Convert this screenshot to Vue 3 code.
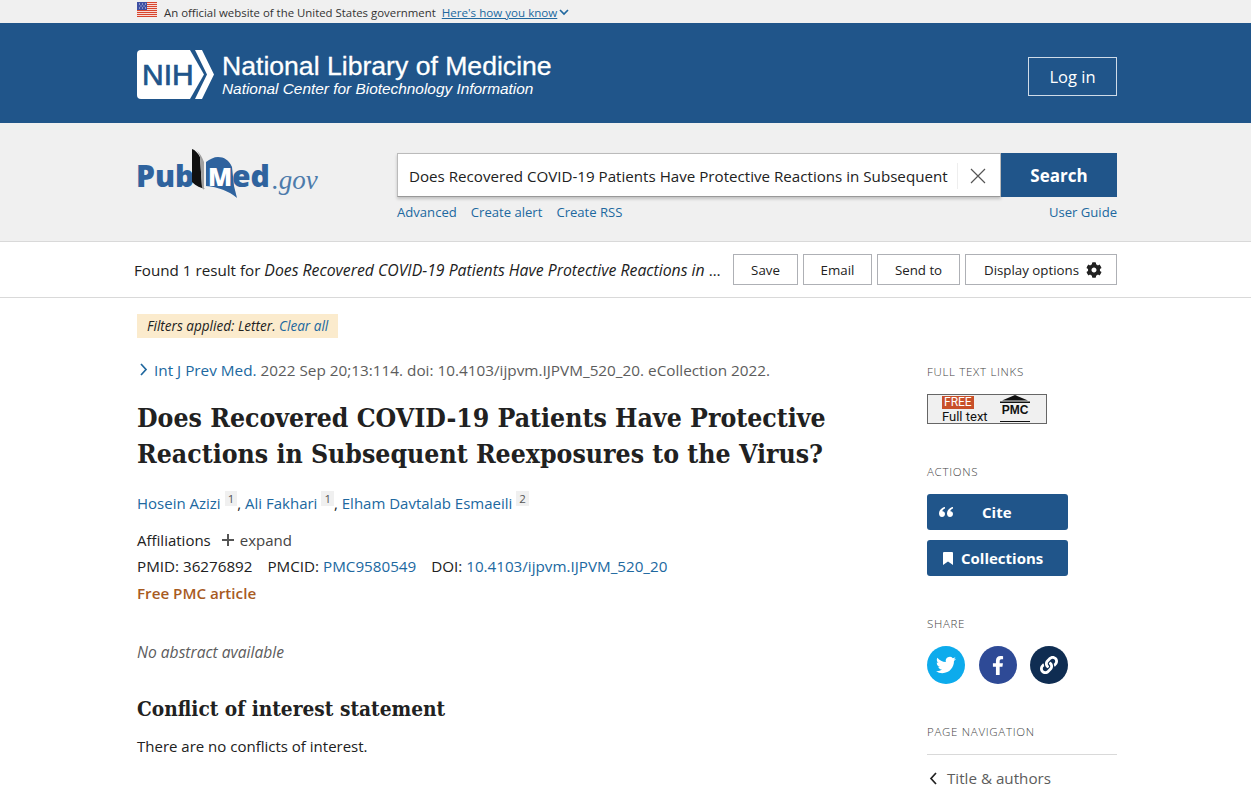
<template>
  <div class="page">
    <div class="gov-banner">
      <div class="wrap gov-inner">
        <svg class="flag" width="20" height="15" viewBox="0 0 20 15">
          <rect width="20" height="15" fill="#fff" />
          <rect v-for="n in 8" :key="n" x="0" :y="(n - 1) * 2" width="20" height="1.2" fill="#d8452e" />
          <rect width="10" height="8" fill="#3d4fa3" />
          <path d="M2 2h1M5 2h1M8 2h1M3.500 4h1M6.500 4h1M2 6h1M5 6h1M8 6h1" stroke="#fff" stroke-width="0.8" />
        </svg>
        <span class="gov-text">An official website of the United States government</span>
        <a class="gov-link">Here's how you know</a>
        <svg width="10" height="7" viewBox="0 0 10 7" class="gov-chev"><path d="M1 1l4 4 4-4" fill="none" stroke="#20689f" stroke-width="1.7" /></svg>
      </div>
    </div>

    <header class="ncbi-head">
      <div class="wrap head-inner">
        <div class="nih-brand">
          <svg class="nih-logo" width="78" height="49" viewBox="0 0 78 49">
            <path d="M4 0h49l14 24.500L53 49H4a4 4 0 0 1-4-4V4a4 4 0 0 1 4-4z" fill="#fff" />
            <path d="M58 0h7l12 24.500L65 49h-7l12-24.500z" fill="#fff" />
            <text x="5" y="35" class="nih-word">NIH</text>
          </svg>
          <div class="nih-titles">
            <div class="nlm">National Library of Medicine</div>
            <div class="ncbi">National Center for Biotechnology Information</div>
          </div>
        </div>
        <a class="login">Log in</a>
      </div>
    </header>

    <section class="search-band">
      <div class="wrap search-inner">
        <svg class="pubmed-logo" width="182" height="52" viewBox="0 0 182 52">
          <text x="-1" y="38" class="pm-word">Pub</text>
          <path d="M55 0c3 1 6 4 8 8l2 30 3 2c-4-1-9-3-13-7z" fill="#111" />
          <path d="M59 1c4 3 6 7 8 12v28l-2-3-2-30c-1-3-2-5-4-7z" fill="#a0a0a0" />
          <path d="M69 13c4-3 8-5 12-5 6 0 11 3 14 10l2 19 3 12c-8-7-19-11-31-12z" fill="#2f639e" />
          <text x="71" y="37" class="pm-m">M</text>
          <text x="95" y="38" class="pm-word">ed</text>
          <text x="135" y="40" class="pm-gov">.gov</text>
        </svg>
        <div class="search-col">
          <div class="search-row">
            <div class="search-box">
              <span class="search-term">Does Recovered COVID-19 Patients Have Protective Reactions in Subsequent</span>
              <span class="search-sep"></span>
              <svg width="16" height="16" viewBox="0 0 16 16" class="clear-x"><path d="M1 1l14 14M15 1L1 15" stroke="#555" stroke-width="1.200" fill="none" /></svg>
            </div>
            <button class="search-btn">Search</button>
          </div>
          <div class="search-links">
            <a>Advanced</a>
            <a>Create alert</a>
            <a>Create RSS</a>
            <a class="guide">User Guide</a>
          </div>
        </div>
      </div>
    </section>

    <section class="result-bar">
      <div class="wrap result-inner">
        <div class="result-text">Found 1 result for <em>Does Recovered COVID-19 Patients Have Protective Reactions in Subsequent Reexposures to the Virus?</em></div>
        <div class="result-btns">
          <button class="act save">Save</button>
          <button class="act email">Email</button>
          <button class="act send">Send to</button>
          <button class="act display">
            Display options
            <svg width="16" height="16" viewBox="0 0 512 512">
              <path fill="#222" d="M487.400 315.700l-42.600-24.600c4.300-23.200 4.300-47 0-70.200l42.600-24.600c4.900-2.800 7.100-8.600 5.500-14-11.100-35.600-30-67.800-54.700-94.600-3.800-4.100-10-5.100-14.800-2.300L380.800 110c-17.900-15.400-38.500-27.300-60.800-35.100V25.800c0-5.600-3.900-10.500-9.400-11.700-36.700-8.200-74.300-7.800-109.200 0-5.500 1.200-9.400 6.100-9.400 11.700V75c-22.200 7.900-42.800 19.800-60.800 35.100L88.700 85.500c-4.900-2.800-11-1.900-14.800 2.300-24.700 26.700-43.600 58.900-54.700 94.600-1.700 5.400.6 11.200 5.500 14L67.300 221c-4.300 23.200-4.300 47 0 70.200l-42.600 24.600c-4.900 2.800-7.100 8.600-5.500 14 11.100 35.600 30 67.800 54.700 94.600 3.800 4.100 10 5.100 14.800 2.300l42.600-24.600c17.900 15.400 38.500 27.300 60.800 35.100v49.200c0 5.600 3.900 10.500 9.400 11.700 36.700 8.200 74.300 7.800 109.200 0 5.500-1.200 9.400-6.100 9.400-11.700v-49.200c22.200-7.900 42.800-19.800 60.800-35.100l42.600 24.600c4.900 2.800 11 1.900 14.800-2.300 24.700-26.700 43.600-58.900 54.700-94.600 1.500-5.500-.7-11.300-5.600-14.100zM256 336c-44.100 0-80-35.900-80-80s35.900-80 80-80 80 35.900 80 80-35.900 80-80 80z" />
            </svg>
          </button>
        </div>
      </div>
    </section>

    <main class="wrap main-grid">
      <article class="article">
        <div class="filters"><em>Filters applied: Letter. <a>Clear all</a></em></div>
        <div class="citation">
          <svg width="9" height="13" viewBox="0 0 9 13"><path d="M2 1l5 5.500L2 12" fill="none" stroke="#20689f" stroke-width="1.700" /></svg>
          <a>Int J Prev Med.</a> 2022 Sep 20;13:114. doi: 10.4103/ijpvm.IJPVM_520_20. eCollection 2022.
        </div>
        <h1>Does Recovered COVID-19 Patients Have Protective Reactions in Subsequent Reexposures to the Virus?</h1>
        <div class="authors">
          <a>Hosein Azizi</a><sup>1</sup>, <a>Ali Fakhari</a><sup>1</sup>, <a>Elham Davtalab Esmaeili</a><sup>2</sup>
        </div>
        <div class="affil">
          Affiliations
          <svg width="12" height="12" viewBox="0 0 12 12"><path d="M6 0v12M0 6h12" stroke="#555" stroke-width="2" /></svg>
          <span>expand</span>
        </div>
        <div class="ids">
          <span>PMID: 36276892</span>
          <span>PMCID: <a>PMC9580549</a></span>
          <span>DOI: <a>10.4103/ijpvm.IJPVM_520_20</a></span>
        </div>
        <div class="free">Free PMC article</div>
        <p class="no-abstract">No abstract available</p>
        <h2>Conflict of interest statement</h2>
        <p class="conflict">There are no conflicts of interest.</p>
      </article>

      <aside class="side">
        <h3 class="side-title">FULL TEXT LINKS</h3>
        <div class="pmc-badge">
          <div class="pmc-left">
            <span class="pmc-free">FREE</span>
            <span class="pmc-full">Full text</span>
          </div>
          <div class="pmc-right">
            <svg width="30" height="8" viewBox="0 0 30 8"><path d="M15 0l13 5.500H2z M0 6.500h30V8H0z" fill="#111" /></svg>
            <span class="pmc-word">PMC</span>
          </div>
        </div>

        <h3 class="side-title actions-title">ACTIONS</h3>
        <button class="side-btn cite">
          <svg width="14" height="10" viewBox="0 0 14 10">
            <path d="M6 0C3 .5 0 3 0 6.500 0 9 1.500 10 3 10s3-1 3-3-1.500-3-2.700-2.800C3.600 3 4.700 2 6 1.500zM14 0c-3 .5-6 3-6 6.500C8 9 9.500 10 11 10s3-1 3-3-1.500-3-2.700-2.800C11.600 3 12.700 2 14 1.500z" fill="#fff" />
          </svg>
          <span>Cite</span>
        </button>
        <button class="side-btn coll">
          <svg width="10" height="13" viewBox="0 0 10 13"><path d="M1 0h8a1 1 0 0 1 1 1v12L5 9.500 0 13V1a1 1 0 0 1 1-1z" fill="#fff" /></svg>
          <span>Collections</span>
        </button>

        <h3 class="side-title share-title">SHARE</h3>
        <div class="share">
          <span class="circle tw">
            <svg width="20" height="20" viewBox="0 0 24 24"><path fill="#fff" d="M23.953 4.570a10 10 0 0 1-2.825.775 4.958 4.958 0 0 0 2.163-2.723c-.951.555-2.005.959-3.127 1.184a4.920 4.920 0 0 0-8.384 4.482C7.690 8.095 4.067 6.130 1.640 3.162a4.822 4.822 0 0 0-.666 2.475c0 1.710.870 3.213 2.188 4.096a4.904 4.904 0 0 1-2.228-.616v.060a4.923 4.923 0 0 0 3.946 4.827 4.996 4.996 0 0 1-2.212.085 4.936 4.936 0 0 0 4.604 3.417 9.867 9.867 0 0 1-6.102 2.105c-.390 0-.779-.023-1.170-.067a13.995 13.995 0 0 0 7.557 2.209c9.053 0 13.998-7.496 13.998-13.985 0-.210 0-.420-.015-.630A9.935 9.935 0 0 0 24 4.590z" /></svg>
          </span>
          <span class="circle fb">
            <svg width="12" height="19" viewBox="0 0 320 512"><path fill="#fff" d="M279.140 288l14.220-92.660h-88.910v-60.130c0-25.350 12.420-50.060 52.240-50.060h40.420V6.260S260.430 0 225.360 0c-73.220 0-121.080 44.380-121.080 124.720v70.620H22.890V288h81.390v224h100.170V288z" /></svg>
          </span>
          <span class="circle lk">
            <svg width="18" height="18" viewBox="0 0 512 512"><path fill="#fff" d="M326.612 185.391c59.747 59.809 58.927 155.698.36 214.590-.11.120-.24.250-.36.370l-67.200 67.200c-59.270 59.270-155.699 59.262-214.960 0-59.270-59.260-59.270-155.700 0-214.960l37.106-37.106c9.840-9.840 26.786-3.300 27.294 10.606.648 17.722 3.826 35.527 9.690 52.721 1.986 5.822.567 12.262-3.783 16.612l-13.087 13.087c-28.026 28.026-28.905 73.660-1.155 101.960 28.024 28.579 74.086 28.749 102.325.510l67.200-67.190c28.191-28.191 28.073-73.757 0-101.830-3.701-3.694-7.429-6.564-10.341-8.569a16.037 16.037 0 0 1-6.947-12.606c-.396-10.567 3.348-21.456 11.698-29.806l21.054-21.055c5.521-5.521 14.182-6.199 20.584-1.731a152.482 152.482 0 0 1 20.522 17.197zM467.547 44.449c-59.261-59.262-155.690-59.270-214.960 0l-67.200 67.200c-.120.120-.250.250-.360.370-58.566 58.892-59.387 154.781.360 214.590a152.454 152.454 0 0 0 20.521 17.196c6.402 4.468 15.064 3.789 20.584-1.731l21.054-21.055c8.350-8.350 12.094-19.239 11.698-29.806a16.037 16.037 0 0 0-6.947-12.606c-2.912-2.005-6.640-4.875-10.341-8.569-28.073-28.073-28.191-73.639 0-101.830l67.200-67.190c28.239-28.239 74.300-28.069 102.325.510 27.750 28.300 26.872 73.934-1.155 101.960l-13.087 13.087c-4.350 4.350-5.769 10.790-3.783 16.612 5.864 17.194 9.042 34.999 9.690 52.721.509 13.906 17.454 20.446 27.294 10.606l37.106-37.106c59.271-59.259 59.271-155.699.001-214.959z" /></svg>
          </span>
        </div>

        <h3 class="side-title nav-title">PAGE NAVIGATION</h3>
        <div class="nav-item">
          <svg width="9" height="13" viewBox="0 0 9 13"><path d="M7 1L2 6.500 7 12" fill="none" stroke="#222" stroke-width="1.700" /></svg>
          <span>Title &amp; authors</span>
        </div>
      </aside>
    </main>
  </div>
</template>

<script setup>
</script>

<style>
html, body {
  margin: 0;
  height: 795px;
  overflow: hidden;
  background: #fff;
}
</style>

<style scoped>
.page {
  font-family: "Open Sans", "Noto Sans", sans-serif;
  color: #212121;
  font-size: 15.200px;
}
.wrap {
  width: 980px;
  margin-left: 137px;
}
a {
  color: #20689f;
  text-decoration: none;
}
.gov-banner {
  height: 23px;
  background: #f0f0f0;
}
.gov-inner {
  display: flex;
  align-items: center;
  height: 23px;
  padding-top: 2px;
  box-sizing: border-box;
  font-size: 11.400px;
}
.flag {
  margin-right: 7px;
  margin-top: -7px;
}
.gov-text {
  color: #333;
  margin-right: 6px;
}
.gov-link {
  font-size: 11.600px;
  text-decoration: underline;
  color: #20689f;
}
.gov-chev {
  margin-left: 2px;
}
.ncbi-head {
  height: 100px;
  background: #20558a;
}
.head-inner {
  display: flex;
  justify-content: space-between;
  align-items: flex-start;
  height: 100px;
}
.nih-brand {
  display: flex;
  align-items: center;
  gap: 7px;
  margin-top: 27px;
}
.nih-word {
  font-family: "Liberation Sans", sans-serif;
  font-size: 30px;
  fill: #20558a;
  stroke: #20558a;
  stroke-width: 0.7px;
}
.nih-titles {
  font-family: "Liberation Sans", Arial, sans-serif;
  color: #fff;
  margin-bottom: 2px;
}
.nlm {
  font-size: 26.600px;
  line-height: 30px;
  -webkit-text-stroke: 0.3px #fff;
}
.ncbi {
  font-size: 15.400px;
  font-style: italic;
  line-height: 16px;
}
.login {
  width: 87px;
  height: 37px;
  margin-top: 34px;
  border: 1px solid #cfdbe8;
  color: #fff;
  font-size: 16.500px;
  display: flex;
  align-items: center;
  justify-content: center;
}
.search-band {
  height: 119px;
  background: #f0f0f0;
  border-bottom: 1px solid #d9d9d9;
  box-sizing: border-box;
}
.search-inner {
  display: flex;
  padding-top: 26px;
}
.pubmed-logo {
  width: 182px;
  margin-right: 78px;
  flex: none;
}
.pm-word {
  font-family: "Open Sans", sans-serif;
  font-weight: 800;
  font-size: 30px;
  fill: #2f639e;
}
.pm-m {
  font-family: "Open Sans", sans-serif;
  font-weight: 800;
  font-size: 25px;
  fill: #fff;
}
.pm-gov {
  font-family: "Liberation Serif", serif;
  font-style: italic;
  font-size: 27px;
  fill: #4d7bab;
}
.search-col {
  flex: 1;
  padding-top: 4px;
}
.search-row {
  display: flex;
  height: 44px;
}
.search-box {
  flex: 1;
  display: flex;
  align-items: center;
  background: #fff;
  border: 1px solid #bbb;
  border-bottom-color: #999;
  box-sizing: border-box;
  padding: 1px 14px 0 11px;
  box-shadow: 0 2px 3px rgba(0, 0, 0, 0.2);
  font-size: 15.150px;
  min-width: 0;
}
.search-term {
  flex: 1;
  white-space: nowrap;
  overflow: hidden;
}
.search-sep {
  width: 1px;
  height: 26px;
  background: #eee;
  margin: 0 12px 0 8px;
}
.search-btn {
  width: 116px;
  border: 0;
  background: #20558a;
  color: #fff;
  font-family: inherit;
  font-weight: 700;
  font-size: 17px;
  padding: 0;
}
.search-links {
  display: flex;
  gap: 14px;
  margin-top: 6px;
  font-size: 13.100px;
}
.guide {
  margin-left: auto;
}
.result-bar {
  height: 56px;
  border-bottom: 1px solid #d9d9d9;
  box-sizing: border-box;
}
.result-inner {
  display: flex;
  align-items: center;
  height: 55px;
}
.result-text {
  flex: 1;
  min-width: 0;
  margin-left: -3px;
  margin-right: 10px;
  white-space: nowrap;
  overflow: hidden;
  text-overflow: ellipsis;
}
.result-text em {
  font-size: 15.800px;
}
.result-btns {
  display: flex;
  gap: 5px;
}
.act {
  height: 31px;
  background: #fff;
  border: 1px solid #aeb0b5;
  font-family: inherit;
  font-size: 13.300px;
  color: #212121;
  padding: 0;
}
.save { width: 65px; }
.email { width: 69px; }
.send { width: 83px; }
.display {
  width: 152px;
  display: flex;
  align-items: center;
  gap: 7px;
  padding-left: 18px;
}
.main-grid {
  display: flex;
  justify-content: space-between;
}
.article {
  width: 700px;
  padding-top: 16px;
}
.filters {
  display: inline-block;
  background: #fbebcd;
  padding: 0 10px;
  height: 24px;
  line-height: 24px;
  font-size: 13.550px;
}
.citation {
  margin-top: 20px;
  line-height: 24px;
  color: #5c5c5c;
  font-size: 15.300px;
}
.citation svg {
  margin: 0 6px 0 2px;
}
h1 {
  font-family: "DejaVu Serif Condensed", "DejaVu Serif", serif;
  font-size: 26.400px;
  line-height: 36px;
  font-weight: 700;
  color: #212121;
  margin: 18px 0 0;
}
.authors {
  margin-top: 19px;
  line-height: 24px;
  font-size: 15px;
}
sup {
  font-size: 11.500px;
  background: #f0f0f0;
  color: #555;
  padding: 0 3px;
  margin-left: 4px;
  line-height: 1;
}
.affil {
  margin-top: 13px;
  line-height: 24px;
  display: flex;
  align-items: center;
  gap: 6px;
  font-size: 15px;
}
.affil svg {
  margin-left: 5px;
}
.affil span {
  color: #444;
}
.ids {
  display: flex;
  gap: 15px;
  line-height: 24px;
  margin-top: 2px;
}
.free {
  margin-top: 3px;
  line-height: 24px;
  color: #a85b1f;
  font-weight: 600;
}
.no-abstract {
  font-style: italic;
  color: #5c5c5c;
  margin: 35px 0 0;
  line-height: 24px;
  font-size: 15.600px;
}
h2 {
  font-family: "DejaVu Serif Condensed", "DejaVu Serif", serif;
  font-size: 20.700px;
  font-weight: 700;
  line-height: 30px;
  margin: 30px 0 0;
}
.conflict {
  margin: 10px 0 0;
  line-height: 24px;
  font-size: 15px;
}
.side {
  width: 190px;
  padding-top: 66px;
}
.side-title {
  margin: 0;
  font-weight: 300;
  font-size: 11.500px;
  line-height: 16px;
  letter-spacing: 0.7px;
  color: #444;
}
.pmc-badge {
  width: 120px;
  height: 30px;
  margin-top: 14px;
  background: #f0f0f0;
  border: 1px solid #666;
  box-sizing: border-box;
  display: flex;
  font-family: "Roboto", "Liberation Sans", sans-serif;
}
.pmc-left {
  display: flex;
  flex-direction: column;
  align-items: flex-start;
  margin-left: 14px;
  width: 47px;
}
.pmc-free {
  background: #c8502a;
  color: #fff;
  font-size: 12px;
  line-height: 13px;
  padding: 0 2px;
  margin-top: 1px;
}
.pmc-full {
  font-size: 13px;
  line-height: 14px;
  color: #111;
  margin-top: 1px;
}
.pmc-right {
  display: flex;
  flex-direction: column;
  align-items: center;
  margin-left: 11px;
  width: 30px;
  border-bottom: 1.500px solid #111;
  height: 26px;
}
.pmc-word {
  font-family: "Liberation Sans", sans-serif;
  font-weight: 700;
  font-size: 12px;
  line-height: 15px;
  color: #111;
}
.actions-title {
  margin-top: 40px;
}
.side-btn {
  display: flex;
  align-items: center;
  width: 141px;
  height: 36px;
  margin-top: 14px;
  background: #20558a;
  color: #fff;
  border: 0;
  border-radius: 3px;
  font-family: inherit;
  font-weight: 700;
  font-size: 15px;
  padding: 0;
}
.cite {
  padding-left: 12px;
}
.cite span {
  margin-left: 29px;
}
.coll {
  padding-left: 16px;
  margin-top: 10px;
}
.coll span {
  margin-left: 8px;
}
.share-title {
  margin-top: 40px;
}
.share {
  display: flex;
  gap: 13.500px;
  margin-top: 14px;
}
.circle {
  width: 38px;
  height: 38px;
  border-radius: 50%;
  display: flex;
  align-items: center;
  justify-content: center;
}
.tw { background: #0dabec; }
.fb { background: #2e4a96; }
.lk { background: #0f2d52; }
.nav-title {
  margin-top: 40px;
}
.nav-item {
  border-top: 1px solid #d9d9d9;
  margin-top: 14px;
  padding-top: 11px;
  display: flex;
  align-items: center;
  gap: 9px;
  line-height: 24px;
  color: #5c5c5c;
}
.nav-item svg {
  margin-left: 2px;
}
</style>
